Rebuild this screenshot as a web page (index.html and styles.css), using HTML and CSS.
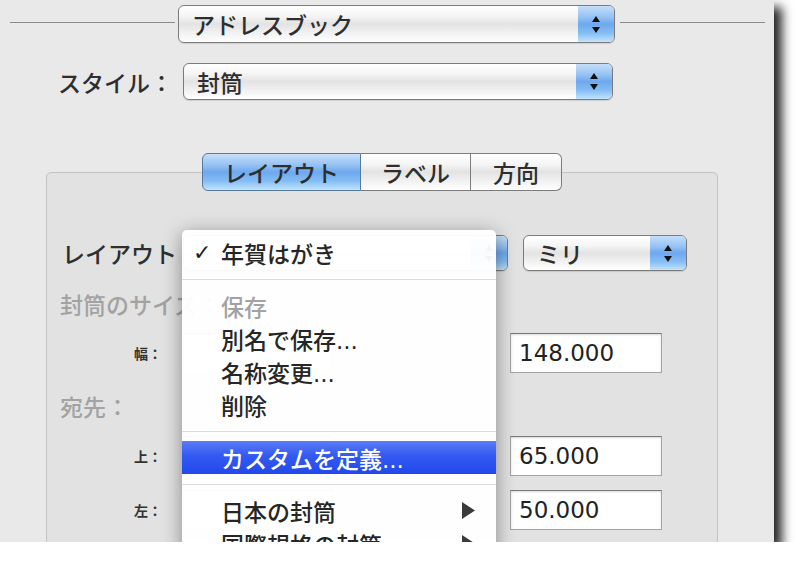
FILE: index.html
```html
<!DOCTYPE html>
<html lang="ja">
<head>
    <meta charset="UTF-8">
    <meta name="viewport" content="width=device-width, initial-scale=1.0">
    <title>プリント</title>
    <link rel="stylesheet" href="styles.css">
</head>
<body>
    <div class="window">
        <div class="top-row">
            <div class="rule rule-left"></div>
            <div class="popup popup-main">
                <span class="popup-label">アドレスブック</span>
                <span class="stepper"><i class="up"></i><i class="down"></i></span>
            </div>
            <div class="rule"></div>
        </div>

        <div class="style-row">
            <span class="label">スタイル：</span>
            <div class="popup popup-style">
                <span class="popup-label">封筒</span>
                <span class="stepper"><i class="up"></i><i class="down"></i></span>
            </div>
        </div>

        <div class="group">
            <div class="tabs">
                <span class="tab tab-layout selected">レイアウト</span>
                <span class="tab tab-label">ラベル</span>
                <span class="tab tab-dir">方向</span>
            </div>

            <div class="layout-row">
                <span class="row-label">レイアウト</span>
                <!-- covered by the open menu -->
                <div class="popup popup-layout">
                    <span class="popup-label"></span>
                    <span class="stepper"><i class="up"></i><i class="down"></i></span>
                </div>
                <div class="popup popup-unit">
                    <span class="popup-label">ミリ</span>
                    <span class="stepper"><i class="up"></i><i class="down"></i></span>
                </div>
            </div>

            <div class="section disabled">封筒のサイズ：</div>
            <div class="field-row row-size">
                <span class="small-label">幅：</span>
                <div class="field short"></div>
                <span class="grow"></span>
                <div class="field">148.000</div>
            </div>

            <div class="section disabled">宛先：</div>
            <div class="field-row row-top">
                <span class="small-label">上：</span>
                <div class="field short"></div>
                <span class="grow"></span>
                <div class="field">65.000</div>
            </div>
            <div class="field-row row-left">
                <span class="small-label">左：</span>
                <div class="field short"></div>
                <span class="grow"></span>
                <div class="field">50.000</div>
            </div>
        </div>

        <div class="menu">
            <div class="menu-item"><span class="mark">✓</span>年賀はがき</div>
            <div class="separator"></div>
            <div class="menu-item disabled"><span class="mark"></span>保存</div>
            <div class="menu-item"><span class="mark"></span>別名で保存...</div>
            <div class="menu-item"><span class="mark"></span>名称変更...</div>
            <div class="menu-item"><span class="mark"></span>削除</div>
            <div class="separator"></div>
            <div class="menu-item active"><span class="mark"></span>カスタムを定義...</div>
            <div class="separator"></div>
            <div class="menu-item"><span class="mark"></span>日本の封筒
                <svg class="arrow" width="13" height="17" viewBox="0 0 13 17"><polygon points="0,0 13,8.5 0,17" fill="#3a3a3a"/></svg>
            </div>
            <div class="menu-item"><span class="mark"></span>国際規格の封筒
                <svg class="arrow" width="13" height="17" viewBox="0 0 13 17"><polygon points="0,0 13,8.5 0,17" fill="#3a3a3a"/></svg>
            </div>
        </div>
    </div>
</body>
</html>
```

FILE: styles.css
```css
body {
    margin: 0;
    background-color: #fff;
    font-family: "DejaVu Sans", "Noto Sans CJK JP", sans-serif;
    font-weight: 500;
    color: #2a2a2a;
    overflow: hidden;
}

.window {
    position: relative;
    width: 774px;
    height: 542px;
    background-color: #e9e9e9;
    box-shadow: 8px 7px 10px rgba(0, 0, 0, 0.85);
    overflow: hidden;
}

/* top separator with the source popup */
.top-row {
    display: flex;
    align-items: center;
    padding: 5px 9px 0 10px;
}

.rule {
    flex: 1;
    height: 1px;
    margin-top: -3px;
    background-color: #8c8c8c;
}

.rule.rule-left {
    flex: none;
    width: 165px;
}

/* aqua popup buttons */
.popup {
    display: flex;
    align-items: stretch;
    box-sizing: border-box;
    border: 1px solid #7c7c7c;
    border-radius: 6px;
    overflow: hidden;
    background: linear-gradient(#ffffff 0%, #f5f5f5 28%, #e3e3e3 50%, #ececec 66%, #ffffff 100%);
    box-shadow: 0 1px 1px rgba(0, 0, 0, 0.12);
}

.popup-label {
    flex: 1;
    display: flex;
    align-items: center;
    padding-left: 13px;
    font-size: 23px;
    color: #2e2e2e;
}

.stepper {
    width: 36px;
    display: flex;
    flex-direction: column;
    align-items: center;
    justify-content: center;
    gap: 5px;
    background: linear-gradient(#c6defa 0%, #93c1f3 32%, #6ea8ee 50%, #84bdf4 75%, #c2e4fd 100%);
}

.stepper i {
    width: 0;
    height: 0;
    border-left: 4px solid transparent;
    border-right: 4px solid transparent;
}

.stepper .up {
    border-bottom: 6px solid #111;
}

.stepper .down {
    border-top: 6px solid #111;
}

.popup-main {
    width: 437px;
    height: 38px;
    margin: 0 5px 0 3px;
}

.style-row {
    display: flex;
    align-items: center;
    margin-top: 20px;
    padding-left: 58px;
}

.label {
    width: 125px;
    font-size: 23px;
    color: #2e2e2e;
}

.popup-style {
    width: 430px;
    height: 37px;
}

/* group box */
.group {
    box-sizing: border-box;
    width: 672px;
    height: 420px;
    margin: 72px 0 0 46px;
    border: 1px solid #c3c3c3;
    border-radius: 5px;
    background-color: #e2e2e2;
}

.tabs {
    display: flex;
    width: 360px;
    height: 38px;
    margin: -20px auto 0;
}

.tab {
    box-sizing: border-box;
    display: flex;
    align-items: center;
    justify-content: center;
    font-size: 23px;
    color: #2e2e2e;
    border: 1px solid #7c7c7c;
    border-left: none;
    background: linear-gradient(#ffffff 0%, #f5f5f5 28%, #e3e3e3 50%, #ececec 66%, #ffffff 100%);
}

.tab-layout {
    width: 159px;
    border-left: 1px solid #56799f;
    border-radius: 6px 0 0 6px;
}

.tab-label {
    width: 110px;
}

.tab-dir {
    width: 91px;
    border-radius: 0 6px 6px 0;
}

.tab.selected {
    border-color: #56799f;
    background: linear-gradient(#c6defa 0%, #93c1f3 32%, #6ea8ee 50%, #84bdf4 75%, #c2e4fd 100%);
}

.layout-row {
    display: flex;
    align-items: center;
    margin-top: 44px;
    padding-left: 15px;
}

.row-label {
    width: 121px;
    font-size: 23px;
    color: #2e2e2e;
}

.popup-layout {
    width: 325px;
    height: 36px;
}

.popup-unit {
    width: 164px;
    height: 36px;
    margin-left: 15px;
}

.section {
    margin-top: 20px;
    padding-left: 13px;
    font-size: 23px;
    line-height: 30px;
}

.section.disabled {
    color: #a2a2a2;
}

.field-row {
    display: flex;
    align-items: center;
    padding: 0 55px 0 15px;
}

.row-size {
    margin-top: 12px;
}

.row-top {
    margin-top: 13px;
}

.row-left {
    margin-top: 14px;
}

.small-label {
    box-sizing: border-box;
    width: 121px;
    padding-right: 21px;
    text-align: right;
    font-size: 14px;
    font-weight: bold;
    color: #333;
}

.grow {
    flex: 1;
}

.field {
    box-sizing: border-box;
    width: 152px;
    height: 40px;
    padding-left: 8px;
    line-height: 38px;
    font-size: 23px;
    font-weight: normal;
    color: #222;
    background-color: #fff;
    border: 1px solid #a4a4a4;
    border-top-color: #7a7a7a;
    box-shadow: inset 0 1px 2px rgba(0, 0, 0, 0.15);
}

.field.short {
    width: 150px;
}

/* open popup menu */
.menu {
    position: absolute;
    left: 182px;
    top: 230px;
    width: 314px;
    height: 340px;
    box-sizing: border-box;
    padding-top: 6px;
    background-color: rgba(255, 255, 255, 0.96);
    border-radius: 5px 5px 0 0;
    box-shadow: 0 4px 20px rgba(0, 0, 0, 0.4);
    font-size: 23px;
}

.menu-item {
    display: flex;
    align-items: center;
    height: 33px;
    padding-left: 11px;
    color: #262626;
}

.menu-item .mark {
    width: 28px;
    font-size: 22px;
    font-weight: bold;
    color: #1e1e1e;
}

.menu-item.disabled {
    color: #a2a2a2;
}

.menu-item.active {
    color: #fff;
    background: linear-gradient(#5b7cf6 0%, #3459f1 45%, #2248ec 100%);
}

.separator {
    height: 20px;
    background: linear-gradient(#dcdcdc, #dcdcdc) center / 100% 1px no-repeat;
}

.arrow {
    margin-left: auto;
    margin-right: 21px;
}
```
